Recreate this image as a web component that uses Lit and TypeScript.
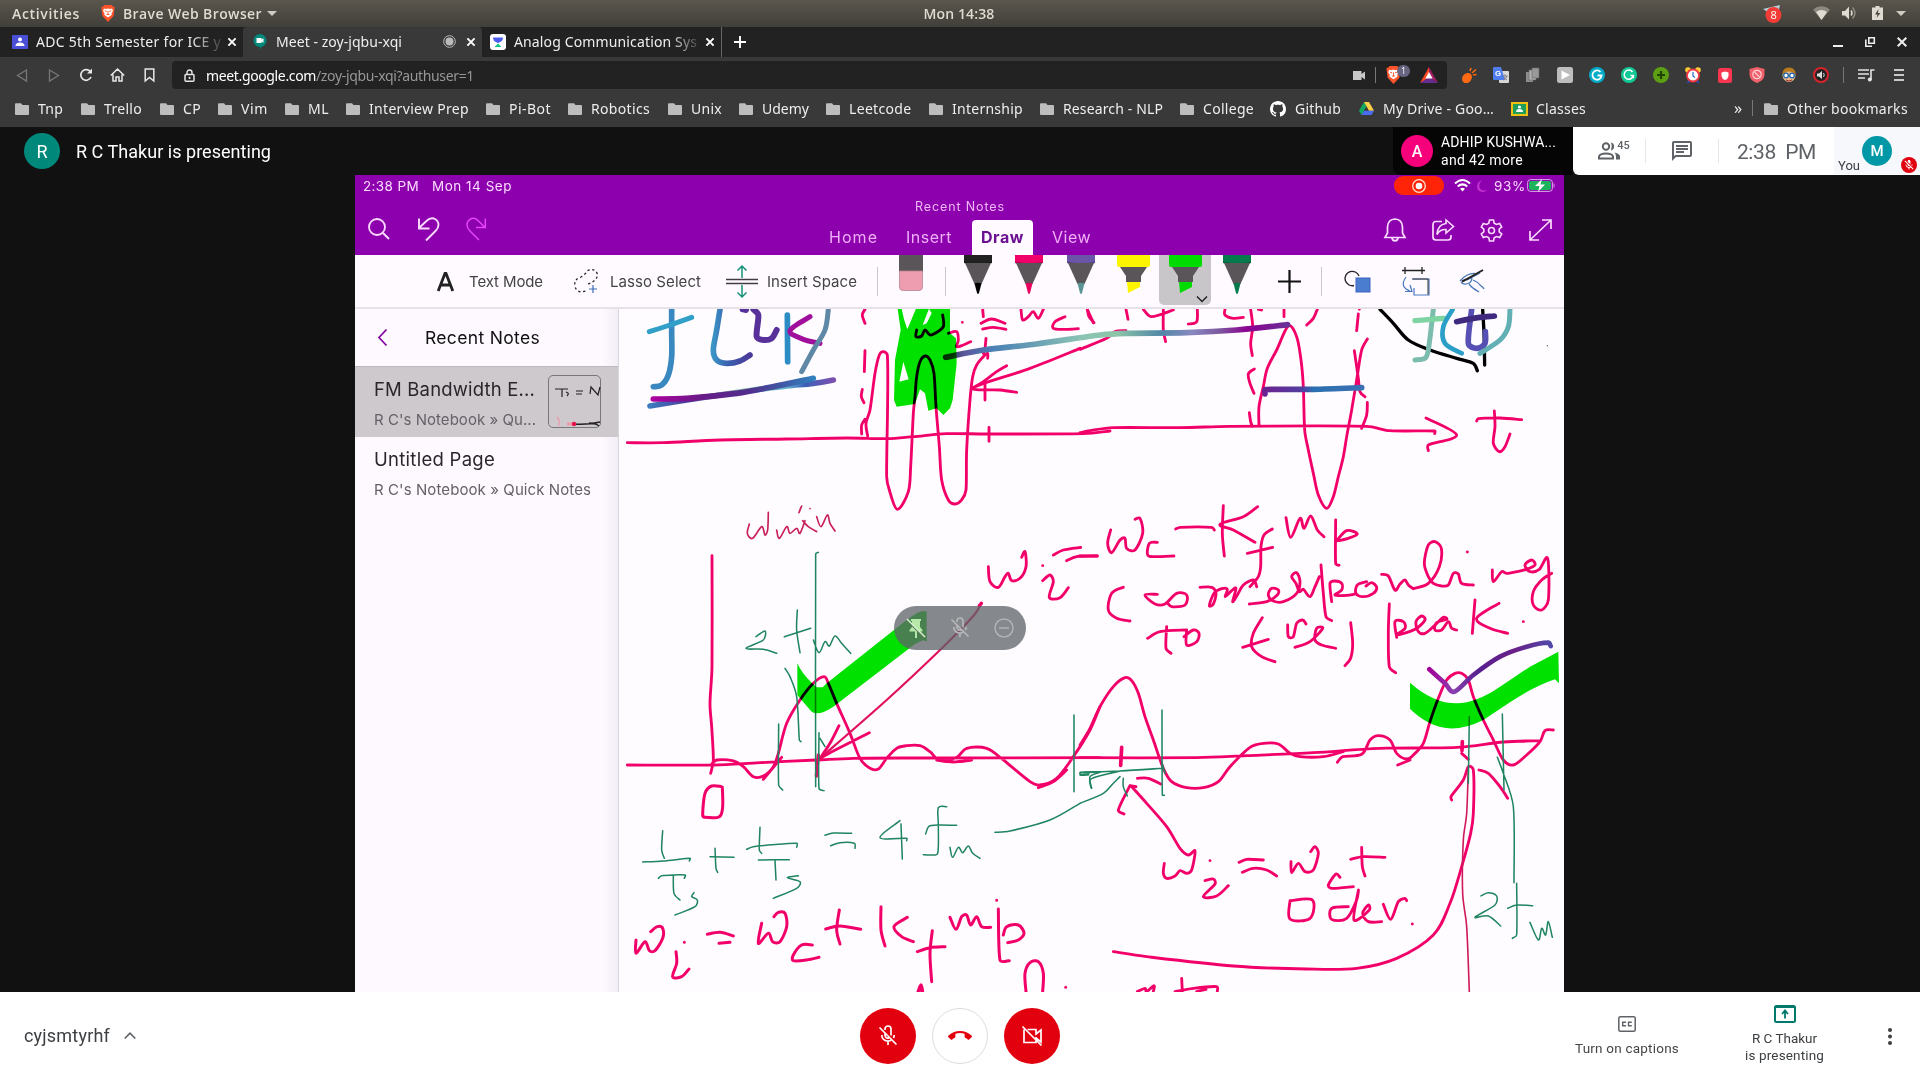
import { LitElement, html, svg, css } from "lit";
import { customElement, property } from "lit/decorators.js";
import { styleMap } from "lit/directives/style-map.js";

/* A one-line label whose tracking is tuned so that it spans a given width. */
@customElement("fit-text")
class FitText extends LitElement {
  @property() text = "";
  @property({ type: Number }) w = 0;
  static styles = css`
    :host { display: inline-block; white-space: pre; flex: none; }
  `;
  updated() {
    const s = this.renderRoot.querySelector("span") as HTMLElement;
    s.style.letterSpacing = "0px";
    const natural = s.getBoundingClientRect().width;
    s.style.letterSpacing = (this.w - natural) / this.text.length + "px";
  }
  render() {
    return html`<span>${this.text}</span>`;
  }
}

/* Catmull-Rom smoothing through a list of "x,y" points; handles are kept short on short segments. */
function smooth(src: string): string {
  const p = src.trim().split(/\s+/).map((q) => q.split(",").map(Number));
  let d = `M${p[0][0]} ${p[0][1]}`;
  if (p.length === 1) return d + "h.1";
  for (let i = 0; i < p.length - 1; i++) {
    const a = p[Math.max(0, i - 1)], b = p[i], c = p[i + 1], e = p[Math.min(p.length - 1, i + 2)];
    const len = Math.hypot(c[0] - b[0], c[1] - b[1]);
    const handle = (from: number[], to: number[]) => {
      const x = to[0] - from[0], y = to[1] - from[1], l = Math.hypot(x, y) || 1;
      const k = Math.min(1 / 6, (len * 0.36) / l);
      return [x * k, y * k];
    };
    const h1 = handle(a, c), h2 = handle(b, e);
    d += `C${b[0] + h1[0]} ${b[1] + h1[1]} ${c[0] - h2[0]} ${c[1] - h2[1]} ${c[0]} ${c[1]}`;
  }
  return d;
}
const ink = (strokes: string, color: string, w = 6.5) =>
  svg`<path d=${strokes.split(";").filter((s) => s.trim()).map(smooth).join("")} stroke=${color} stroke-width=${w} />`;

const PINK = "#f2006a";
const GREEN = "#1f8560";

const A_PINK = `22,428 130,428 300,420 500,417 680,414 800,416 880,410 980,401 1100,402 1390,401 1470,393;
743,408 738,370 750,330 765,220 778,165 790,155 802,165 803,300 800,530 808,570 832,628 865,575 872,500 880,340 885,290 890,230 900,185 915,168 930,180 942,220 948,320 958,440 965,540 985,600 1005,612 1025,600 1038,570 1040,450 1050,300 1058,230 1070,195 1095,165 1103,160 1103,175;
735,28 727,45 735,70;735,152 733,215;727,268 724,290 732,308;735,358 725,375 725,402;1107,382 1107,424;1095,250 1095,300;
1380,145 1230,205 1060,263 1140,270 1190,277;1160,197 1130,215 1090,245 1060,263;
890,90 888,110 905,108 915,90 930,105 945,100 970,80 968,45;985,100 1010,95 1015,120 1010,140 1030,135 1052,125;1027,67;
1088,27 1090,50;1083,70 1115,57 1155,70;1088,87 1120,82 1158,88;1098,115 1095,145 1090,160;
1203,28 1208,60 1225,50 1240,35 1255,55 1270,28;1335,50 1305,65 1300,85 1335,88 1375,86;1402,28 1420,68`;
const A_THIN = `388,672 382,700 398,715 425,680 435,705 443,690 445,637;470,690 478,715 500,680 510,700 530,685 540,700 555,662;545,618 537,638 543,622;548,662 565,680 590,695;590,650 603,680 622,645 630,670 645,693;570,626`;
const B_PINK = `0,398 30,392 100,383 300,383 450,379 860,379 930,392 1064,393 1064,401;1038,354 1130,405 1045,435 1045,452;
0,148 80,115 105,95 138,92;
22,28 27,50 42,68;138,28 144,58;190,28 215,50 280,30;250,30 250,90 257,125;352,28 350,65 325,72;435,28 435,45 460,55 490,52;512,28 518,80 512,130 517,167;612,28 612,50;712,28 700,55 680,75;535,28 545,30;835,42 830,92;838,28;523,207 505,222 510,250 522,280;508,338 512,365 517,380;
537,375 537,320 550,260 562,205 590,150 625,78 650,110 663,180 670,260 674,390 685,450 700,520 715,585 740,625 760,590 775,530 790,470 800,410 815,330 830,240 845,150 862,117;823,152 835,235 840,275 855,290;862,307 860,345 845,385;
1190,363 1195,356 1260,354 1325,359;1243,333 1245,380 1240,430 1258,455 1275,440 1290,402;
92,690 83,730 95,758 120,720 135,715 140,745 165,750 188,700 180,655 165,658;0,743;0,768 52,769;232,727 208,730 203,765 225,770 282,768;287,687 300,682 395,682 403,690;430,617 427,700 433,768;533,620 490,650 420,673 460,690 525,727;577,687 552,705 543,740 542,800 535,830 510,860;502,760 578,742;618,653 632,712 660,655 672,685 692,648 712,690 732,710;767,660 767,790 777,796;775,722 805,715 832,702 800,692 770,722;
130,862 95,880 85,930 110,955 150,963;232,883 195,885 225,912 255,912 290,880 320,885 315,915 275,920 262,908;360,862 395,862 408,880 400,912 388,917 402,880 425,866 442,868 436,890 455,872 468,865 458,905 472,885 490,855 520,840 530,860;
508,912 560,905 592,885 595,870 575,865 565,885 580,903 610,905 650,880 660,845 650,818 635,830 648,850 658,875 670,868 690,890 705,860 718,830;723,795 730,880 738,950 755,962;755,905 750,850 765,843 785,850 785,870 765,885 800,886 825,882;860,845 832,855 828,880 850,890 880,880 890,862 875,848 858,858;905,823 925,828 945,870 960,852 975,840 985,855 1000,866;1000,866 1045,850 1078,800 1084,745 1065,725 1045,735 1033,790 1045,830 1060,850 1085,858 1105,855 1120,820 1135,822 1145,850 1180,855;1162,756;1237,810 1240,845 1265,815 1280,820 1310,815 1340,808 1365,795 1355,780 1335,795 1350,815 1378,808 1403,775 1405,900 1385,930 1360,915 1360,875 1385,840 1415,820;
203,1015 240,995 320,990;260,980 258,1045 273,1060;320,990 320,1035 350,1025 357,1000 340,990 312,1010;547,953 520,1000 515,1040 545,1070 585,1085;488,1042 565,1018;623,975 625,1010 640,1010 650,970 668,960 678,972;645,1042 690,1025 728,985 710,985 705,1020 725,1035 767,1045;812,968 818,1030 812,1075 795,1097;
928,912 925,1000 928,1100 947,1118;950,1012 945,965 970,965 975,985 950,1005 1005,988 1035,960 1025,948 1008,965 1015,995 1035,1000 1060,980 1090,952 1100,958 1070,968 1065,990 1085,990 1105,965 1115,985 1130,990;1185,900 1177,1000;1257,910 1190,955 1230,985 1283,1000;1330,965`;
const C_PINK = `276,47 276,380 270,490 275,560 280,660 272,700;22,675 280,675 420,668 590,660 700,655 900,654 1440,653;
275,672 290,660 340,663 370,680 400,710 430,708 460,680 475,640 500,550 540,480 580,430 612,410 625,430 650,490 690,580 720,655 750,685 775,687 800,655 830,625 860,617 900,617 930,635 960,662 1010,652 1040,625 1100,625 1150,660 1230,725 1260,735 1310,715 1360,650 1410,570 1440,500;430,718 485,652;1255,743 1300,725 1340,690;950,660 1000,666 1055,660;657,557 630,610 600,655;748,578 640,633 600,655;
1105,80 1110,125 1135,142 1155,110 1165,100 1175,122 1200,115 1218,80 1215,35 1205,52;1268,122 1290,105 1300,125 1288,172 1320,173 1345,143;1268,77;1300,45 1330,30 1382,22;1340,62 1370,50 1432,47`;
const C_GREEN = `595,37 587,42 587,740;532,210 530,270 540,338;493,290 572,265;408,290 435,273 430,300 378,325 430,328 470,340;580,300 597,338 615,305 628,318 645,288 665,310 692,340;495,385 510,410 530,470 538,600 543,605;476,552 476,735 488,750;597,578 597,745 612,752;600,595 615,620;1362,525 1362,755;1440,695 1382,697 1382,705 1405,705;1440,697 1410,710 1415,745`;
const D_GREEN = `128,212 125,270 133,295;68,306 130,303 210,295 208,303;115,355 125,347 195,345 193,355;160,348 162,400 180,420;222,398 215,410 232,420 225,440 165,465;270,290 342,292;285,265 288,325 293,337;420,202 418,270 425,280;380,268 400,260 530,250 530,262;415,300 508,299;465,302 468,360;535,347 502,353 540,365 530,385 460,415;615,226 640,219 695,220;632,257 660,248 703,250 705,265;840,182 780,233 860,235 860,242;843,192 847,297;980,140 955,143 955,195 953,280 930,285 910,284;917,222 930,197 1010,196;990,262 998,292 1015,262 1028,278 1045,258 1058,280 1080,295;1125,217 1170,213 1290,180 1380,130`;
const D_PINK = `48,540 48,580 75,545 88,572 105,572 128,535 128,505 112,500 92,515;168,575 170,610 158,650 185,650 207,627;193,547;262,523 300,517 340,528;297,550 330,547;425,490 415,550 445,520 458,545 480,545 500,500 495,460 475,457 462,470;577,555 545,555 520,585 520,602 560,600 597,592;617,507 660,498 722,508;658,450 650,510 660,552;783,440 783,510 795,558;862,472 822,500 845,530 880,545;937,512 930,580 935,665;892,575 930,563 975,560;990,472 1008,508 1025,470 1040,465 1052,495 1070,470 1085,500 1112,502;1135,447 1140,600 1168,602;1150,525 1160,500 1195,495 1212,520 1195,540 1163,548;1130,421;1218,695 1215,640 1230,608 1255,605 1270,640 1268,695;1337,682`;
const E_PINK = `0,315 30,265 60,200 100,140 135,113 155,122 175,160 195,230 220,300 250,385 275,425 320,443 370,443 415,425 450,380 510,322 550,310 595,312 630,340 660,350 730,350 790,335;0,353 350,353 500,347 700,338 900,325 1130,322 1270,306 1380,302;
772,367 788,350 845,343 870,300 895,287 930,300 950,340 980,357 1000,345 1030,310 1050,245 1075,175 1100,120 1125,100 1145,100 1165,120 1180,170 1210,240 1240,300 1270,360 1300,375 1340,345 1380,305 1395,272 1420,270;953,375 990,360;
150,437 115,510 132,522;168,440 150,437;155,440 200,490 260,560 300,625 325,645 345,633 335,690 320,700 300,692 285,708 260,715 250,700 253,670;172,415 205,415 242,432;375,722 400,717 405,732 370,770 410,768 445,737;390,662;477,667 500,658 550,660;487,697 520,685 560,690 590,708;633,665 635,698 655,670 675,695 700,690 715,640 705,620 692,635;780,712 768,702 745,735 755,745 820,740;812,658 850,650 915,652;845,622 847,680 855,708;630,782 697,780 690,835 630,837 630,782;
805,800 755,805 755,838 800,835 830,780 835,752 822,840 868,810 865,795 848,820 865,845 905,845;910,793 932,838 955,785 975,775 980,782;997,852;
100,935 200,950 460,978 680,987 830,985 950,955 1060,885 1110,790 1145,680 1172,580 1180,520 1180,390 1165,380 1150,420 1113,470 1115,480;1197,390 1225,400 1260,440 1283,475;1145,340 1165,358;
172,1055 195,1045 200,1055 222,1037 220,1055;305,1015 307,1055;285,1055 340,1045 410,1040 412,1055;350,1055 378,1048`;
const E_GREEN = `246,210 247,465 253,466;0,405 27,402;0,398 120,393 245,385;120,393 50,410 30,420 33,443;120,410 100,430 70,460 0,490;130,415 130,440 142,468;245,365 255,400;1168,230 1165,430;1267,222 1272,450;1252,352 1270,400 1300,500 1302,728;1203,768 1225,758 1250,768 1245,795 1185,832 1225,828 1262,858;1310,730 1310,885 1297,895;1283,805 1310,795 1358,797;1350,847 1375,900 1385,865 1397,885 1405,845 1417,892`;

const grad = (id: string, x1: number, x2: number, stops: [number, string][]) => svg`
  <linearGradient id=${id} gradientUnits="userSpaceOnUse" x1=${x1} y1="0" x2=${x2} y2="0">
    ${stops.map(([o, c]) => svg`<stop offset=${o} stop-color=${c} />`)}
  </linearGradient>`;

@customElement("ink-canvas")
class InkCanvas extends LitElement {
  static styles = css`
    :host { display: block; }
    svg { display: block; }
    g { fill: none; stroke-linecap: round; stroke-linejoin: round; }
    .hl { fill: #00e400; stroke: none; mix-blend-mode: multiply; fill-rule: evenodd; }
  `;
  render() {
    return html`<svg width="945" height="683" viewBox="619 309 945 683">
      <defs>
        ${grad("long", 975, 2005, [[0, "#35305c"], [0.06, "#5a5a9c"], [0.14, "#4a80b4"], [0.4, "#8cc4b4"], [0.5, "#8cc4a8"], [0.63, "#5088a8"], [0.72, "#8a88c0"], [0.8, "#7c58a0"], [0.88, "#8c0090"], [1, "#6a3098"]])}
        ${grad("bar", 550, 850, [[0, "#6c2290"], [0.4, "#5040a0"], [0.5, "#2a70b0"], [1, "#3c70b4"]])}
        ${grad("u1", 90, 590, [[0, "#b000a0"], [0.3, "#6a1a88"], [0.6, "#50308c"], [1, "#2f84c0"]])}
        ${grad("u2", 80, 640, [[0, "#3a80c0"], [0.25, "#50309a"], [0.5, "#80b8a0"], [0.75, "#60b0cc"], [0.85, "#3c60b8"], [1, "#7a50b0"]])}
        ${grad("par", 280, 390, [[0, "#3a94c4"], [0.4, "#3a60b0"], [1, "#4a3a98"]])}
        ${grad("chk", 1048, 1412, [[0, "#a0009a"], [0.2, "#8a40b0"], [0.4, "#582090"], [0.7, "#6a2088"], [1, "#5048a8"]])}
      </defs>
      <g transform="translate(620 300) scale(.33333)">
        ${ink(A_PINK, PINK, 8.5)} ${ink(A_THIN, "#c8205c", 5)}
        ${ink("155,28 155,100 155,170 145,225 125,255 100,260", "#3a88c0", 17)}
        ${ink("88,95 150,75 215,52", "#30a0c8", 15)}
        ${ink("300,28 290,90 280,150 290,180 320,190 360,183 390,165", "url(#par)", 17)}
        ${ink("368,28 378,30;400,28 415,45 410,110 430,120 455,115 470,90", "#58309a", 18)}
        ${ink("502,45 503,185", "#2c8cc4", 17)}
        ${ink("570,50 510,92 550,118 600,130", "#a0109c", 15)}
        ${ink("625,28 615,90 580,150 545,215", "#5f88a6", 15)}
        ${ink("90,318 200,300 400,270 500,258 580,250 640,240", "url(#u2)", 17)}
        ${ink("100,297 200,295 350,280 450,262 580,235", "url(#u1)", 17)}
      </g>
      <g transform="translate(1080 300) scale(.33333)">
        ${ink(B_PINK, PINK, 8.5)}
        ${ink("900,28 940,70 985,120 1050,150 1130,175 1180,190 1192,212;1208,28 1212,100 1214,195", "#000", 10)}
        ${ink("1060,28 1045,150 1035,175 1005,180", "#7cbcae", 15)}
        ${ink("1005,62 1050,58 1095,55", "#7fd4a4", 16)}
        ${ink("1118,28 1090,80 1095,130 1145,160", "#2c9fc8", 14)}
        ${ink("1175,28 1165,130 1190,145 1215,130 1216,95", "#5650b4", 17)}
        ${ink("1130,65 1180,55 1243,48", "#3f2a80", 17)}
        ${ink("1290,28 1285,80 1260,120 1200,160", "#62b0b4", 15)}
        ${ink("555,282 557,269 700,268 845,263", "url(#bar)", 17)}
        ${ink("1402,137", "#555", 4)}
      </g>
      <g transform="translate(620 300) scale(.33333)">
        ${ink("977,172 1090,150 1250,132 1440,105 1520,100 1700,98 1850,90 2003,74", "url(#long)", 17)}
      </g>
      <g transform="translate(620 540) scale(.33333)">
        ${ink(C_PINK, PINK, 8.5)}
        ${ink("1085,190 1060,228 960,330 800,480 600,655", "#e0105e", 6.5)}
        ${ink("595,645 589,708;1078,197 1084,190", PINK, 10)}
        ${ink(C_GREEN, GREEN, 4.6)}
      </g>
      <g transform="translate(620 760) scale(.33333)">
        ${ink("305,80 275,78 255,100 248,165 255,172 298,170 308,140 307,82", PINK, 9)}
        ${ink(D_PINK, PINK, 9)} ${ink("895,695 903,675 907,695", PINK, 11)}
        ${ink(D_GREEN, GREEN, 4.6)}
      </g>
      <g transform="translate(1080 640) scale(.33333)">
        ${ink(E_PINK, PINK, 8.5)}
        ${ink("125,322 122,376;1147,305 1146,332", PINK, 11)}
        ${ink("1165,380 1160,520 1150,600 1148,760 1160,860 1168,1055", "#d0185c", 4.8)}
        ${ink(E_GREEN, GREEN, 4.6)}
        ${ink("1048,88 1095,130 1123,155 1180,105 1260,50 1340,20 1405,8 1412,18", "url(#chk)", 14)}
      </g>
      <path class="hl" transform="translate(620 300) scale(.33333)"
        d="M833 26H990V100L1008 115 1010 190 998 300 990 325 970 345 950 325 925 332 915 280 900 268 885 312 830 320 822 300 825 180 842 90ZM888 26L862 88 852 58 845 26ZM927 26L908 75 920 70 935 40ZM850 185L866 238 838 245Z" />
      <path class="hl" transform="translate(620 540) scale(.33333)"
        d="M532 370Q545 400 575 428L590 442H608L620 430 860 240Q905 205 920 215V305L910 300 885 312 640 500Q595 530 575 515L540 475 532 465Z" />
      <path class="hl" transform="translate(1080 640) scale(.33333)"
        d="M990 128Q1060 190 1130 190 1190 188 1260 140L1350 80 1435 35 1437 130 1425 118Q1360 140 1290 187L1210 240Q1120 285 1050 250 1010 228 990 206Z" />
    </svg>`;
  }
}

const MIC_OFF = "M19 11h-1.7c0 .74-.16 1.43-.43 2.05l1.23 1.23c.56-.98.9-2.09.9-3.28zm-4.02.17c0-.06.02-.11.02-.17V5c0-1.66-1.34-3-3-3S9 3.34 9 5v.18l5.98 5.99zM4.27 3L3 4.27l6.01 6.01V11c0 1.66 1.33 3 2.99 3 .22 0 .44-.03.65-.08l1.66 1.66c-.71.33-1.5.52-2.31.52-2.76 0-5.3-2.1-5.3-5.1H5c0 3.41 2.72 6.23 6 6.72V21h2v-3.28c.91-.13 1.77-.45 2.54-.9L19.73 21 21 19.73 4.27 3z";
const MIC_OFF_THIN = svg`<path d="M9 6V5a3 3 0 0 1 6 0v6.5M9 9v2.5a3 3 0 0 0 4 2.4M5.8 11c0 3.6 2.7 6 6.2 6 1.3 0 2.6-.4 3.6-1.1M18.200 11c0 1.200-.3 2.200-.8 3M12 17v4M3.500 3.500l17 17" fill="none" stroke="currentColor" stroke-width="1.7"/>`;
const HANGUP = "M12 9c-1.6 0-3.15.25-4.6.72v3.1c0 .39-.23.74-.56.9-.98.49-1.87 1.12-2.66 1.85-.18.18-.43.28-.7.28-.28 0-.53-.11-.71-.29L.29 13.08c-.18-.17-.29-.42-.29-.7 0-.28.11-.53.29-.71C3.34 8.78 7.46 7 12 7s8.66 1.78 11.71 4.67c.18.18.29.43.29.71 0 .28-.11.53-.29.71l-2.48 2.48c-.18.18-.43.29-.71.29-.27 0-.52-.11-.7-.28-.79-.74-1.69-1.36-2.67-1.85-.33-.16-.56-.5-.56-.9v-3.1C15.15 9.25 13.6 9 12 9z";
const CHAT = "M4 4h16v12H5.17L4 17.17V4m0-2c-1.1 0-1.99.9-1.99 2L2 22l4-4h14c1.1 0 2-.9 2-2V4c0-1.1-.9-2-2-2H4zm2 10h8v2H6v-2zm0-3h12v2H6V9zm0-3h12v2H6V6z";
const GITHUB = "M8 0C3.58 0 0 3.58 0 8c0 3.54 2.29 6.53 5.47 7.59.4.07.55-.17.55-.38 0-.19-.01-.82-.01-1.490-2.010.370-2.530-.490-2.690-.940-.090-.230-.480-.940-.820-1.130-.280-.150-.680-.520-.010-.530.630-.010 1.080.580 1.230.820.720 1.210 1.870.870 2.330.660.070-.520.280-.870.510-1.070-1.780-.200-3.640-.890-3.640-3.950 0-.870.310-1.590.820-2.150-.080-.200-.360-1.020.080-2.120 0 0 .670-.210 2.200.820.640-.180 1.320-.270 2-.270s1.360.090 2 .270c1.530-1.040 2.200-.820 2.200-.820.440 1.100.160 1.920.080 2.120.510.560.820 1.270.820 2.150 0 3.070-1.870 3.750-3.650 3.950.290.250.540.730.540 1.480 0 1.070-.010 1.930-.010 2.200 0 .210.150.460.550.380A8.010 8.010 0 0 0 16 8c0-4.420-3.580-8-8-8z";

const icon = (w: number, h: number, vb: string, body: unknown) =>
  html`<svg width=${w} height=${h} viewBox=${vb} fill="none">${body}</svg>`;
const folder = icon(14, 12, "0 0 14 12", svg`<path d="M0 1.2Q0 .2 1 .2H6L7.500 2H13Q14 2 14 3V11Q14 12 13 12H1Q0 12 0 11Z" fill="#bdbdbd"/>`);
const brave = (w: number, h: number) => icon(w, h, "0 0 14 17", svg`
  <path d="M3.500 0h7l1.500 1.500L13.700 2l-.4 3.500L12.500 11 7 17 1.500 11 .7 5.500.3 2 2 1.500Z" fill="#fb542b"/>
  <path d="M3 3.500l2 .4 2-.5 2 .5 2-.4 1 2.300-1.500 2.500.3 1.500-2 1.500L7 12.500l-1.800-1.200-2-1.500.3-1.500L2 5.800Z" fill="#fff"/>
  <path d="M3.700 5.800l2 .7M10.300 5.800l-2 .7M7 6v3.500M5.500 9.500h3" stroke="#fb542b" stroke-width=".9"/>`);

const bookmarks: [string, number, number][] = [
  ["Tnp", 66, 25], ["Trello", 79, 38], ["CP", 58, 18], ["Vim", 67, 27], ["ML", 61, 21],
  ["Interview Prep", 140, 100], ["Pi-Bot", 82, 42], ["Robotics", 100, 59], ["Unix", 71, 31],
  ["Udemy", 87, 47], ["Leetcode", 103, 62.5], ["Internship", 111, 71], ["Research - NLP", 140, 100], ["College", 89, 51],
];

const extensions = [
  svg`<ellipse cx="6" cy="11" rx="5.500" ry="4.500" transform="rotate(-50 6 11)" fill="#ff6a13"/><path d="M9 4l1-3M11 6l4-3.500M12 8l3.500-.5" stroke="#ff6a13" stroke-width="1.600"/>`,
  svg`<rect x="6" y="4" width="10" height="12" rx="1" fill="#d8d8d8"/><path d="M0 1Q0 0 1 0H8L12 13H1Q0 13 0 12Z" fill="#4f7df0"/><path d="M9.500 9h5M12 7.500v1.500M14 9q-1 3-3.500 4M11 10q1 2 3 3" stroke="#777" stroke-width=".9"/><text x="2" y="9" font-size="8" font-weight="700" fill="#fff">G</text>`,
  svg`<rect x="1" y="5" width="7" height="10" fill="#8d8d8d"/><rect x="4" y="3" width="7" height="10" fill="#b0b0b0" stroke="#666" stroke-width=".6"/><rect x="7" y="1" width="7" height="10" fill="#999" stroke="#666" stroke-width=".6"/>`,
  svg`<rect width="16" height="16" rx="2.500" fill="#bdbdbd"/><path d="M4.500 3.500L13 8l-8.500 4.500Z" fill="#fff"/>`,
  svg`<circle cx="8" cy="8" r="8" fill="#00acc8"/><path d="M11.500 5A4.600 4.600 0 1 0 12.600 8.500H8.500" stroke="#fff" stroke-width="1.800"/>`,
  svg`<circle cx="8" cy="8" r="8" fill="#11ca95"/><path d="M11.500 5A4.600 4.600 0 1 0 12.300 8.500H9.500M12.300 8v3" stroke="#fff" stroke-width="1.500"/>`,
  svg`<circle cx="8" cy="8" r="8" fill="#5d9f12"/><path d="M8 4v8M4 8h8" stroke="#234305" stroke-width="2.200"/>`,
  svg`<circle cx="3" cy="3" r="2.800" fill="#ffcc33"/><circle cx="13" cy="3" r="2.800" fill="#ffcc33"/><circle cx="8" cy="8.500" r="6" fill="#fff" stroke="#f03a47" stroke-width="1.800"/><path d="M8 5v4l2 1.500" stroke="#2b66c8" stroke-width="1.200"/><path d="M4 14l-1.500 2M12 14l1.500 2" stroke="#2b4fc8" stroke-width="1.500"/>`,
  svg`<rect x="1" y="1" width="14" height="15" rx="2.500" fill="#f8364f"/><path d="M8 4.500l3.500 1V9Q11 12 8 13 5 12 4.500 9V5.500Z" fill="#fff"/>`,
  svg`<path d="M8 0l7.500 2V8Q15 13.500 8 16 1 13.500.5 8V2Z" fill="#f0606a"/><circle cx="8" cy="7.500" r="4.200" stroke="#ffd0d4" stroke-width="1.200"/><path d="M5.500 5l5 5" stroke="#ffd0d4" stroke-width="1.200"/>`,
  svg`<circle cx="8" cy="8.500" r="6.500" fill="#e9b98c"/><path d="M1.500 8Q1 .5 8 .5t6.500 7.500Q12 4.500 8 4.500 4 4.500 1.500 8Z" fill="#b87a1d"/><circle cx="5" cy="8.500" r="2.300" fill="#fff" stroke="#1f66b0" stroke-width="1.300"/><circle cx="11" cy="8.500" r="2.300" fill="#fff" stroke="#1f66b0" stroke-width="1.300"/><path d="M5 13q3 2 6 0" stroke="#a03030"/>`,
  svg`<circle cx="8" cy="8" r="7" fill="#222" stroke="#d8232a" stroke-width="2"/><path d="M4 6.500h2L9 4v8L6 9.500H4Z" fill="#ddd"/><path d="M10.500 6q1.500 2 0 4" stroke="#ddd"/>`,
];

const pen = (cap: string, tip: string) => icon(28, 40, "0 0 28 40", svg`
  <path d="M0 0H28V8H0Z" fill=${cap}/><path d="M0 6.500Q14 9.500 28 6.500V8.500Q14 11 0 8.500Z" fill="#0003"/>
  <path d="M1 8H27L17.500 29H10.500Z" fill="#5a5558"/><path d="M10.500 28.500Q14 27 17.500 28.500L15 38Q14 40 13 38Z" fill=${tip}/>`);
const marker = (c: string) => icon(33, 40, "0 0 33 40", svg`
  <path d="M0 0H33V10Q33 12 31 12H2Q0 12 0 10Z" fill=${c}/><path d="M3 12H30L24 21V27H9V21Z" fill="#5a5558"/>
  <path d="M10 27H23V32L11 38Z" fill=${c}/>`);

@customElement("app-root")
class AppRoot extends LitElement {
  static styles = css`
    :host { display: block; width: 1920px; height: 1080px; overflow: hidden; background: #111; font-family: "Noto Sans", "Open Sans", sans-serif; }
    * { box-sizing: border-box; }
    svg { display: block; flex: none; overflow: visible; }
    .row { display: flex; align-items: center; }
    .grow { flex: 1; }
    .sys { height: 27px; background: linear-gradient(#5a564d, #413f3a); color: #dfdbd2; font: 600 14px "Open Sans", sans-serif; display: grid; grid-template-columns: 1fr auto 1fr; align-items: center; padding: 0 14px 1px 12px; }
    .sys .left { gap: 0; }
    .sys .bravewrap { margin: 0 8px 0 21px; }
    .sys .caret { margin-left: 5px; }
    .sys .right { justify-content: flex-end; }
    .m-wifi { margin-left: 29px; } .m-vol { margin-left: 12px; } .m-bat { margin-left: 15px; } .m-car { margin-left: 13px; }
    .tabs { height: 30px; background: #222; color: #eee; font-size: 14px; }
    .tab { height: 30px; display: flex; align-items: center; padding-bottom: 1px; }
    .t1 { width: 243px; padding-left: 12px; }
    .t2 { width: 239px; padding-left: 10px; background: #393939; border-radius: 4px 4px 0 0; }
    .t3 { width: 240px; padding-left: 8px; border-right: 1px solid #666; }
    .label1 { margin-left: 8px; width: 185px; }
    .label2 { margin-left: 9px; width: 167px; }
    .fade { -webkit-mask-image: linear-gradient(90deg, #000 84%, #0002 100%); mask-image: linear-gradient(90deg, #000 84%, #0002 100%); }
    .x1 { margin-left: 7px; } .x2 { margin-left: 11px; } .x3 { margin-left: 7px; }
    .new { margin-left: 12px; }
    .win { gap: 22px; padding-right: 13px; }
    .tools { height: 36px; background: #393939; }
    .nav { width: 172px; padding-left: 16px; }
    .nav svg:nth-child(2) { margin-left: 20px; } .nav svg:nth-child(3) { margin-left: 19px; } .nav svg:nth-child(4) { margin-left: 17px; } .nav svg:nth-child(5) { margin-left: 19px; }
    .url { width: 1275px; height: 28px; background: #222; border-radius: 4px; padding: 0 9px 0 12px; color: #fff; font-size: 14px; }
    .url .addr { margin-left: 11px; }
    .dim { color: #979797; }
    .vline { width: 1px; background: #777; height: 16px; flex: none; }
    .url .vline { margin: 0 10px; }
    .shield { position: relative; margin-right: 18px; width: 16px; }
    .shield i { position: absolute; left: 11px; top: -1px; width: 13px; height: 12px; border-radius: 6px; background: #666480; color: #fff; font: 8px/12px "Noto Sans", sans-serif; text-align: center; }
    .ext { padding-left: 14px; gap: 16px; width: 391px; font-family: "Liberation Sans", sans-serif; }
    .end { gap: 0; padding-left: 5px; }
    .end svg:nth-child(2) { margin-left: 14px; } .end svg:nth-child(3) { margin-left: 19px; }
    .marks { height: 34px; background: #393939; color: #eee; font-size: 14px; padding-left: 15px; padding-bottom: 4px; }
    .mark { display: flex; align-items: center; gap: 9px; flex: none; }
    .mark svg { margin-top: 1px; }
    .git { width: 89px; margin-left: 1px; } .drive { width: 152px; } .cls { width: 223px; gap: 8px; }
    .more { width: 18px; font-size: 16px; }
    .meet { height: 48px; font-family: Roboto, sans-serif; color: #fff; background: #111; }
    .av { border-radius: 50%; display: flex; align-items: center; justify-content: center; flex: none; color: #fff; }
    .av.r { width: 36px; height: 36px; background: #00897b; margin-left: 24px; font-size: 18px; }
    .pres { margin-left: 16px; font-size: 18px; }
    .people { width: 180px; height: 48px; background: #050505; border-radius: 0 0 0 8px; padding-left: 8px; }
    .av.a { width: 32px; height: 32px; background: #f6007c; font: 500 16px Roboto, sans-serif; }
    .names { margin-left: 8px; display: flex; flex-direction: column; font-size: 14px; line-height: 18px; padding-bottom: 1px; }
    .panel { width: 347px; height: 47.500px; align-self: flex-start; background: #fff; border-radius: 0 0 0 6px; color: #5f6368; }
    .panel .cell { display: flex; align-items: center; justify-content: center; height: 24px; border-right: 1px solid #e4e6e8; }
    .c1 { width: 73px; padding-left: 10px; } .c2 { width: 73px; } .panel .c3 { width: 115px; border: 0; font-size: 21px; padding-top: 2px; }
    .n45 { font: 500 11px Roboto, sans-serif; align-self: flex-start; margin: 0 0 0 -3px; }
    .you { flex: 1; height: 47px; background: #f6f8fb; position: relative; color: #3c4043; font-size: 13px; }
    .you .lbl { position: absolute; left: 4px; bottom: 1px; }
    .av.m { position: absolute; left: 28px; top: 9px; width: 30px; height: 30px; background: #0097a7; font: 500 15px Roboto, sans-serif; }
    .mut { position: absolute; left: 67px; top: 30px; width: 16px; height: 16px; border-radius: 50%; background: #e0000f; color: #fff; display: grid; place-items: center; }
    .stage { height: 817px; background: #111; padding-left: 355px; position: relative; }
    .app { width: 1209px; height: 817px; background: #fefaff; font-family: Inter, sans-serif; color: #333; overflow: hidden; }
    .head { height: 80px; background: #8c00ad; color: #fbdcff; display: grid; grid-template-columns: 1fr 1fr 1fr; }
    .head .l { padding-left: 8px; }
    .st { height: 21px; font-size: 13.500px; gap: 13px; }
    .acts { margin-top: 21px; height: 24px; }
    .acts svg:nth-child(1) { margin-left: 5px; } .acts svg:nth-child(2) { margin-left: 28px; } .acts svg:nth-child(3) { margin-left: 26px; }
    .mid { display: flex; flex-direction: column; align-items: center; }
    .rn { margin-top: 24px; margin-left: 1px; font-size: 12.500px; line-height: 15px; color: #f0b8f8; }
    .menu { margin-top: 6px; height: 35px; font-size: 16px; color: #f0b0f8; align-self: flex-start; padding-left: 71px; }
    .menu > fit-text, .menu > span { margin-top: -2px; }
    .menu .home { width: 77px; } .menu .ins { width: 66px; }
    .drawtab { width: 61px; height: 35px; background: #fefaff; border-radius: 4px 4px 0 0; color: #6a1090; font-weight: 700; padding: 7px 9px 0; margin-right: 19px; }
    .rr { display: flex; flex-direction: column; align-items: flex-end; }
    .rr .st { gap: 0; padding-right: 8px; }
    .rr .bar { margin-top: 21px; padding-right: 12px; gap: 26px; height: 26px; }
    .rec { width: 50px; height: 19px; border-radius: 9px; background: #ff2408; display: grid; place-items: center; margin-right: 10px; }
    .ribbon { height: 54px; border-bottom: 2px solid #e6e2e8; font-size: 15px; color: #444; background: #fefaff; padding-left: 82px; }
    .ribbon .top { align-self: flex-start; }
    .tm { margin-left: 15px; } .g1 { margin-left: 31px; } .g2 { margin-left: 12px; } .g3 { margin-left: 25px; } .g4 { margin-left: 9px; }
    .rl { width: 1px; height: 29px; background: #cbc7cd; }
    .r1 { margin-left: 20px; } .er { margin-left: 21px; } .r2 { margin-left: 22px; } .p1 { margin-left: 18px; } .p2 { margin-left: 23px; } .p3 { margin-left: 24px; } .p4 { margin-left: 22px; }
    .sel { width: 52px; height: 50px; background: #c9c6ca; border-radius: 0 0 5px 5px; margin-left: 9px; padding-left: 10px; position: relative; }
    .sel .dn { position: absolute; right: 3px; bottom: 2px; }
    .p6 { margin-left: 12px; } .plus { margin-left: 27px; } .r3 { margin-left: 20px; } .s1 { margin-left: 22px; } .s2 { margin-left: 32px; } .s3 { margin-left: 30px; }
    .body { display: flex; height: 683px; }
    .side { width: 264px; background: linear-gradient(90deg, #fef9ff 94%, #f3eef5); border-right: 1px solid #d9d5db; color: #2a262b; }
    .shead { height: 57px; padding-left: 23px; font-size: 17.500px; color: #111; }
    .shead fit-text { margin-left: 38px; }
    .note { height: 71px; padding: 8px 17px 0 19px; display: flex; justify-content: space-between; }
    .note.on { background: #cdc9cd; border-top: 1px solid #bdb9bd; }
    .nt { font-size: 18.500px; line-height: 25px; display: block; margin-top: 2px; }
    .ns { font-size: 15px; line-height: 20px; display: block; margin-top: 8px; color: #666168; }
    .thumb { width: 53px; height: 53px; border: 1px solid #777; border-radius: 5px; margin-top: 0; }
    .pad { flex: 1; background: #fffcff; }
    .pill { position: absolute; left: 894px; top: 431px; width: 132px; height: 44px; border-radius: 22px; background: rgba(95, 99, 104, 0.76); color: #b5b7b9; padding: 0 12px; gap: 24px; }
    .foot { height: 88px; background: #fff; font-family: Roboto, sans-serif; color: #3c4043; display: grid; grid-template-columns: 1fr auto 1fr; align-items: center; }
    .room { padding-left: 24px; font-size: 18px; gap: 14px; padding-bottom: 1px; }
    .calls { gap: 16px; }
    .call { width: 56px; height: 56px; border-radius: 50%; background: #e2000f; color: #fff; display: grid; place-items: center; }
    .call.end { background: #fff; border: 1px solid #dadce0; padding: 0; color: #e2000f; }
    .fr { justify-content: flex-end; padding-right: 24px; font-size: 13.500px; }
    .col { display: flex; flex-direction: column; align-items: center; }
    .cap { width: 104px; gap: 8px; margin-right: 66px; color: #444746; }
    .prs { width: 79px; margin-right: 60px; line-height: 17.500px; margin-top: -3px; }
    .prs svg { margin-bottom: 7px; }
    .dots { width: 12px; }
  `;

  private x = icon(8, 8, "0 0 8 8", svg`<path d="M.4.4l7.200 7.200M7.600.4L.4 7.600" stroke="#fff" stroke-width="1.900"/>`);

  private system() {
    return html`<div class="sys">
      <div class="row left">
        <fit-text text="Activities" w="68"></fit-text>
        <span class="bravewrap">${brave(14, 17)}</span>
        <fit-text text="Brave Web Browser" w="139"></fit-text>
        <span class="caret">${icon(10, 5, "0 0 10 5", svg`<path d="M0 0h10L5 5z" fill="#d0ccc4"/>`)}</span>
      </div>
      <fit-text text="Mon 14:38" w="71"></fit-text>
      <div class="row right">
        ${icon(21, 18, "0 0 21 18", svg`<path d="M0 5L17 1 14 14Z" fill="#b8d0dc"/><circle cx="10.500" cy="11" r="8" fill="#f33c35"/><text x="7.500" y="15" font-size="11" font-weight="400" fill="#fff">8</text>`)}
        <span class="m-wifi">${icon(17, 14, "0 0 17 14", svg`<path d="M0 3.500Q8.500-3 17 3.500L8.500 14Z" fill="#8c8980"/><path d="M3 6Q8.500 2 14 6L8.500 14Z" fill="#dfdbd2"/>`)}</span>
        <span class="m-vol">${icon(15, 14, "0 0 15 14", svg`<path d="M0 5h3l4-4.500v13L3 9.500H0Z" fill="#dfdbd2"/><path d="M9 4.500q2 2.500 0 5" stroke="#dfdbd2" stroke-width="1.500"/><path d="M10.500 1.500q5 5.500 0 11" stroke="#8c8980" stroke-width="1.500"/>`)}</span>
        <span class="m-bat">${icon(11, 14, "0 0 11 14", svg`<path d="M3.500 0h4v1.500H11V14H0V1.500H3.500Z" fill="#dfdbd2"/><path d="M6.500 3L3 8.500h2.500L4.500 12 8.500 7H6Z" fill="#4c4943"/>`)}</span>
        <span class="m-car">${icon(10, 5, "0 0 10 5", svg`<path d="M0 0h10L5 5z" fill="#d0ccc4"/>`)}</span>
      </div>
    </div>`;
  }

  private tabs() {
    return html`<div class="row tabs">
      <div class="tab t1">
        ${icon(16, 14, "0 0 16 14", svg`<rect width="16" height="14" rx="1" fill="#4a4fd8"/><circle cx="8" cy="4.500" r="2" fill="#fff"/><path d="M3.500 11q0-3.500 4.500-3.500t4.500 3.500Z" fill="#fff"/>`)}
        <fit-text class="label1 fade" text="ADC 5th Semester for ICE y" w="185"></fit-text>
        <span class="x1">${this.x}</span>
      </div>
      <div class="tab t2">
        ${icon(14, 16, "0 0 14 16", svg`<path d="M7 0a6.500 6.500 0 0 1 1.500 12.800L7 16V13A6.500 6.500 0 0 1 7 0Z" fill="#00897b"/><path d="M3.500 4h5v1.600L10.500 4.300v4.400L8.500 7.400V9h-5Z" fill="#fff"/>`)}
        <span class="label2"><fit-text text="Meet - zoy-jqbu-xqi" w="126"></fit-text></span>
        ${icon(13, 13, "0 0 13 13", svg`<circle cx="6.500" cy="6.500" r="5.800" stroke="#bbb"/><circle cx="6.500" cy="6.500" r="4" fill="#bbb"/>`)}
        <span class="x2">${this.x}</span>
      </div>
      <div class="tab t3">
        ${icon(16, 16, "0 0 16 16", svg`<rect width="16" height="16" rx="3" fill="#fff"/><path d="M3 3.500h10q0 4-5 5.500-5-1.500-5-5.500Z" fill="#4a5cf0"/><path d="M8 9.500l3.500 3.500h-7Z" fill="#12c78a"/>`)}
        <fit-text class="label1 fade" text="Analog Communication Sys" w="183"></fit-text>
        <span class="x3">${this.x}</span>
      </div>
      <span class="new">${icon(12, 12, "0 0 12 12", svg`<path d="M6 0v12M0 6h12" stroke="#fff" stroke-width="1.900"/>`)}</span>
      <span class="grow"></span>
      <div class="row win">
        ${icon(10, 10, "0 0 10 10", svg`<path d="M0 9h10" stroke="#eee" stroke-width="2"/>`)}
        ${icon(10, 10, "0 0 10 10", svg`<path d="M3.800.8h5.500v5.500H3.800ZM.8 2.500v6.800H7" stroke="#eee" stroke-width="1.600"/>`)}
        ${icon(10, 10, "0 0 10 10", svg`<path d="M.7.7l8.600 8.600M9.300.7L.7 9.300" stroke="#eee" stroke-width="2"/>`)}
      </div>
    </div>`;
  }

  private toolbar() {
    return html`<div class="row tools">
      <div class="row nav">
        ${icon(12, 13, "0 0 12 13", svg`<path d="M10.500 1L1.500 6.500l9 5.500Z" stroke="#777" stroke-width="1.300"/>`)}
        ${icon(12, 13, "0 0 12 13", svg`<path d="M1.500 1l9 5.500-9 5.500Z" stroke="#777" stroke-width="1.300"/>`)}
        ${icon(14, 14, "0 0 14 14", svg`<path d="M11.500 4A5.300 5.300 0 1 0 12 9" stroke="#e8e8e8" stroke-width="1.700"/><path d="M13 .5V5.500H8Z" fill="#e8e8e8"/>`)}
        ${icon(15, 14, "0 0 15 14", svg`<path d="M.8 7.500L7.500 1l6.700 6.500M3 6.500V13h3V9h3v4h3V6.500" stroke="#e8e8e8" stroke-width="1.500"/>`)}
        ${icon(11, 14, "0 0 11 14", svg`<path d="M1.200 1h8.600v12L5.500 9.500 1.200 13Z" stroke="#e8e8e8" stroke-width="1.500"/>`)}
      </div>
      <div class="row url">
        ${icon(11, 13, "0 0 11 13", svg`<rect x="1" y="5.500" width="9" height="6.800" rx="1" stroke="#e4e4e4" stroke-width="1.500"/><path d="M3 5V3.500a2.500 2.500 0 0 1 5 0V5" stroke="#e4e4e4" stroke-width="1.400"/><rect x="4.700" y="7.800" width="1.700" height="2.200" fill="#e4e4e4"/>`)}
        <span class="addr row"><fit-text text="meet.google.com" w="110"></fit-text><fit-text class="dim" text="/zoy-jqbu-xqi?authuser=1" w="158"></fit-text></span>
        <span class="grow"></span>
        ${icon(12, 9, "0 0 12 9", svg`<path d="M0 0h8.500v3L12 .5v8L8.500 6v3H0Z" fill="#c8c8c8"/>`)}
        <span class="vline"></span>
        <span class="shield">${brave(15, 18)}<i>1</i></span>
        ${icon(18, 16, "0 0 18 16", svg`<path d="M9 0L0 16 9 10.500Z" fill="#ff4724"/><path d="M9 0l9 16L9 10.500Z" fill="#9e1f63"/><path d="M0 16h18L9 10.500Z" fill="#662d91"/><path d="M9 5l3.700 6.500H5.300Z" fill="#fff"/>`)}
      </div>
      <div class="row ext">${extensions.map((e) => icon(16, 16, "0 0 16 16", e))}</div>
      <div class="row end">
        <span class="vline"></span>
        ${icon(17, 13, "0 0 17 13", svg`<path d="M0 1h11M0 5h11M0 9h7M13 10.500V1h3.500" stroke="#e4e4e4" stroke-width="1.600"/><circle cx="11.800" cy="10.500" r="2" fill="#e4e4e4"/>`)}
        ${icon(10, 12, "0 0 10 12", svg`<path d="M0 1h10M0 6h10M0 11h10" stroke="#c8c8c8" stroke-width="1.800"/>`)}
      </div>
    </div>`;
  }

  private marks() {
    return html`<div class="row marks">
      ${bookmarks.map(([label, slot, w]) => html`<div class="mark" style=${styleMap({ width: slot + "px" })}>${folder}<fit-text text=${label} w=${w}></fit-text></div>`)}
      <div class="mark git">${icon(16, 16, "0 0 16 16", svg`<path d=${GITHUB} fill="#fff"/>`)}<fit-text text="Github" w="46"></fit-text></div>
      <div class="mark drive">${icon(15, 13, "0 0 15 13", svg`<path d="M5 0L0 8.700 2.500 13 7.500 4.300Z" fill="#11a861"/><path d="M5 0h5l5 8.700h-5Z" fill="#ffcf48"/><path d="M5 8.700h10L12.500 13h-10Z" fill="#4a6cf0"/>`)}<fit-text text="My Drive - Goo…" w="111"></fit-text></div>
      <div class="mark cls">${icon(17, 14, "0 0 17 14", svg`<rect x="1" y="1" width="15" height="12" fill="#1e9e58" stroke="#f2c010" stroke-width="2"/><circle cx="8.500" cy="5" r="1.600" fill="#fff"/><path d="M5 10q0-3 3.500-3t3.500 3Z" fill="#fff"/>`)}<fit-text text="Classes" w="50"></fit-text></div>
      <span class="more">»</span><span class="vline"></span>
      <div class="mark" style=${styleMap({ marginLeft: "11px" })}>${folder}<fit-text text="Other bookmarks" w="121"></fit-text></div>
    </div>`;
  }

  private meet() {
    return html`<div class="row meet">
      <div class="av r">R</div>
      <fit-text class="pres" text="R C Thakur is presenting" w="195"></fit-text>
      <span class="grow"></span>
      <div class="row people"><div class="av a">A</div>
        <div class="names"><fit-text text="ADHIP KUSHWA..." w="115"></fit-text><fit-text text="and 42 more" w="82"></fit-text></div></div>
      <div class="row panel">
        <div class="cell c1">
          ${icon(22, 18, "0 0 22 18", svg`<circle cx="8" cy="4.500" r="3.200" stroke="#5f6368" stroke-width="2"/><path d="M1 16.500V14.500Q2 11.500 8 11.500t7 3v2Z" stroke="#5f6368" stroke-width="2"/><path d="M13 .6a4 4 0 0 1 0 7.800q1.600-3.900 0-7.800ZM16.500 10.500Q22 11.800 22 14.500V17.500H18V14.500Q18 12 16.500 10.500Z" fill="#5f6368"/>`)}
          <span class="n45">45</span>
        </div>
        <div class="cell c2">${icon(24, 24, "0 0 24 24", svg`<path d=${CHAT} fill="#5f6368"/>`)}</div>
        <div class="cell c3"><fit-text text="2:38  PM" w="79"></fit-text></div>
        <div class="you"><span class="lbl">You</span><div class="av m">M</div>
          <div class="mut">${icon(12, 12, "0 0 24 24", svg`<path d=${MIC_OFF} fill="#fff"/>`)}</div></div>
      </div>
    </div>`;
  }

  private notes() {
    return html`<div class="app">
      <div class="head">
        <div class="l">
          <div class="row st"><fit-text text="2:38 PM" w="56"></fit-text><fit-text text="Mon 14 Sep" w="80"></fit-text></div>
          <div class="row acts">
            ${icon(22, 22, "0 0 22 22", svg`<circle cx="9" cy="9" r="8" stroke="#fbdcff" stroke-width="1.800"/><path d="M15 15l6 6" stroke="#fbdcff" stroke-width="2"/>`)}
            ${icon(22, 24, "0 0 22 24", svg`<path d="M1 1.500V11.500H11.500M1 11L9 3.500Q12 .5 16 1.500 20.500 3.500 20.500 8 20.500 11 17.500 14L8 23.500" stroke="#fbdcff" stroke-width="1.900"/>`)}
            ${icon(20, 24, "0 0 20 24", svg`<path d="M19.300 1.500V10.500H10M19 10.500L12 3.500Q9 .5 5.500 1.500 1 3.500 1 8 1 11 4 14L13 23" stroke="#e644f8" stroke-width="1.500"/>`)}
          </div>
        </div>
        <div class="mid">
          <fit-text class="rn" text="Recent Notes" w="90"></fit-text>
          <div class="row menu">
            <span class="home"><fit-text text="Home" w="49"></fit-text></span><span class="ins"><fit-text text="Insert" w="46"></fit-text></span>
            <div class="drawtab"><fit-text text="Draw" w="43"></fit-text></div><fit-text text="View" w="39"></fit-text>
          </div>
        </div>
        <div class="rr">
          <div class="row st">
            <div class="rec">${icon(14, 14, "0 0 14 14", svg`<circle cx="7" cy="7" r="6.300" stroke="#ffe0d0" stroke-width="1.300"/><circle cx="7" cy="7" r="3.300" fill="#fff"/>`)}</div>
            ${icon(17, 13, "0 0 17 13", svg`<path d="M1 4.500Q8.500-2.500 16 4.500M3.700 7.500q4.800-4.300 9.600 0" stroke="#fff" stroke-width="2"/><path d="M8.500 12.500L6 9.700q2.500-2 5 0Z" fill="#fff"/>`)}
            ${icon(23, 12, "-6 0 23 12", svg`<path d="M5 0Q0 6 4 9.500q3 2 6 0-1.500 3-5 2.500Q0 11 0 6.500 0 2 5 0Z" fill="#c030d0"/>`)}
            <fit-text text="93%" w="32"></fit-text>
            ${icon(30, 13, "-1 0 30 13", svg`<rect x=".6" y=".6" width="24.800" height="11.800" rx="3" stroke="#d8a8e8"/><rect x="2" y="2" width="22" height="9" rx="2" fill="#1cb35c"/><path d="M15 0L8 7h4.500L11 13l7-7.500h-4.500Z" fill="#fff"/><path d="M27 4.500v4" stroke="#d050e0" stroke-width="1.500"/>`)}
          </div>
          <div class="row bar">
            ${icon(22, 24, "0 0 22 24", svg`<path d="M1 19.500h20L18.500 15V9Q18 1.200 11 1 4 1.200 3.500 9v6ZM8 20q.5 2.800 3 2.800T14 20" stroke="#fbdcff" stroke-width="1.700"/>`)}
            ${icon(22, 22, "0 0 22 22", svg`<path d="M10 2.500H4Q1 2.500 1 5.500V18Q1 21 4 21H16Q19 21 19 18V16" stroke="#fbdcff" stroke-width="1.700"/><path d="M14 1l7.500 6.500L14 14V10.500Q8 10 5 15.500 5.500 5.500 14 4.500Z" stroke="#fbdcff" stroke-width="1.600"/>`)}
            ${icon(23, 23, "0 0 23 23", svg`<circle cx="11.500" cy="11.500" r="3" stroke="#fbdcff" stroke-width="1.600"/><path d="M9.500 1h4l.7 3.200 2.300 1.300 3.200-1 2 3.500-2.500 2.200v2.600l2.500 2.200-2 3.500-3.200-1-2.300 1.300-.7 3.200h-4l-.7-3.200-2.300-1.300-3.200 1-2-3.500 2.500-2.200v-2.600L1.300 8l2-3.500 3.200 1 2.300-1.300Z" stroke="#fbdcff" stroke-width="1.600"/>`)}
            ${icon(23, 22, "0 0 23 22", svg`<path d="M1.500 20.500L21.500 1.500M13 1h9v9M1 12v9h9" stroke="#fbdcff" stroke-width="1.700"/>`)}
          </div>
        </div>
      </div>
      <div class="row ribbon">
        ${icon(17, 19, "0 0 17 19", svg`<path d="M1.200 19L8 1.500H9L15.800 19M4 13h9" stroke="#222" stroke-width="2.800"/>`)}
        <fit-text class="tm" text="Text Mode" w="74"></fit-text>
        <span class="g1">${icon(24, 24, "0 0 24 24", svg`<path d="M14 15Q25 11 23 4 20-1.500 13 2 11 6 7 8 0 10 .8 17 3 25 12 22" stroke="#222" stroke-width="1.300" stroke-dasharray="2.300 2.600"/><path d="M19 16v8M15 20h8" stroke="#3c6cb8" stroke-width="1.200"/>`)}</span>
        <fit-text class="g2" text="Lasso Select" w="91"></fit-text>
        <span class="g3">${icon(32, 33, "0 0 32 33", svg`<path d="M0 14.500h32M0 18.500h32" stroke="#443c44" stroke-width="1.400"/><path d="M16 13V1M11.500 5.500L16 1l4.500 4.500M16 20v12M11.500 27.500L16 32l4.500-4.500" stroke="#15927a" stroke-width="1.500"/>`)}</span>
        <fit-text class="g4" text="Insert Space" w="90"></fit-text>
        <span class="rl r1"></span>
        <span class="er top">${icon(24, 36, "0 0 24 36", svg`<path d="M0 0H24V16H0Z" fill="#5a5558"/><path d="M.5 16H23.500V32Q23.500 35.500 20 35.500H4Q.5 35.500.5 32Z" fill="#ee9db0" stroke="#b88490" stroke-width=".8"/>`)}</span>
        <span class="rl r2"></span>
        <span class="p1 top">${pen("#222", "#000")}</span><span class="p2 top">${pen("#f2006a", "#e8005c")}</span>
        <span class="p3 top">${pen("#6a55a8", "#5a9494")}</span><span class="p4 top">${marker("#fdf500")}</span>
        <div class="sel top">${marker("#00dc00")}<span class="dn">${icon(12, 8, "0 0 12 8", svg`<path d="M1 1.500L6 6.500l5-5" stroke="#222" stroke-width="1.500"/>`)}</span></div>
        <span class="p6 top">${pen("#057a4c", "#067a4c")}</span>
        <span class="plus">${icon(23, 23, "0 0 23 23", svg`<path d="M11.500 0v23M0 11.500h23" stroke="#111" stroke-width="2.200"/>`)}</span>
        <span class="rl r3"></span>
        <span class="s1">${icon(26, 22, "0 0 26 22", svg`<path d="M10 15.500A7.200 7.200 0 1 1 15 6" stroke="#222" stroke-width="1.300"/><rect x="12" y="8" width="14" height="14" fill="#4a7cd0" stroke="#3c62c0"/>`)}</span>
        <span class="s2">${icon(27, 29, "0 0 27 29", svg`<path d="M3 0v7M20 0v7M0 3.500h23" stroke="#222" stroke-width="1.300"/><path d="M10 12h17v16H12V21M4 10Q-3 20 8 24M3 24.500h7L8 18" stroke="#4a78c0" stroke-width="1.200"/><path d="M10.500 12H26v15.500" stroke="#333"/>`)}</span>
        <span class="s3">${icon(26, 22, "0 0 26 22", svg`<path d="M1 11Q8 3 16 3.500M2 12Q5 16 11 12.500 14 9 12 7M8 10L21 3M14 10q5 2 7 5 3 2 4 4M10 14q3 4 10 8" stroke="#4a78b8" stroke-width="1.300"/><path d="M24 0L7 9.500 3 11.500" stroke="#222" stroke-width="2"/>`)}</span>
      </div>
      <div class="body">
        <div class="side">
          <div class="row shead">${icon(9, 17, "0 0 9 17", svg`<path d="M8.500.5L1 8.500l7.500 8" stroke="#8000a0" stroke-width="1.700"/>`)}<fit-text text="Recent Notes" w="115"></fit-text></div>
          <div class="note on"><div><fit-text class="nt" text="FM Bandwidth E..." w="161"></fit-text><fit-text class="ns" text="R C's Notebook » Qu..." w="162"></fit-text></div>
            <div class="thumb">${icon(51, 51, "0 0 51 51", svg`<path d="M6 13h13M13 13v8M17 16q4 1 1 4M27 15h7M27 18h6M41 18L42 11l7 8 2-8" stroke="#222" stroke-width="1.200"/><path d="M8 41q4 4 1 9" stroke="#f09aa8" stroke-width="1.200"/><path d="M18 48h7" stroke="#f09aa8" stroke-width="3"/><path d="M25 48Q38 49 51 46M40 47q6 0 10 3" stroke="#222" stroke-width="1.300"/><circle cx="25" cy="48" r="2.200" fill="#e8104c"/>`)}</div></div>
          <div class="note"><div><fit-text class="nt" text="Untitled Page" w="121"></fit-text><fit-text class="ns" text="R C's Notebook » Quick Notes" w="217"></fit-text></div></div>
        </div>
        <div class="pad"><ink-canvas></ink-canvas></div>
      </div>
    </div>`;
  }

  render() {
    return html`
      ${this.system()} ${this.tabs()} ${this.toolbar()} ${this.marks()} ${this.meet()}
      <div class="stage">${this.notes()}
        <div class="row pill">
          ${icon(20, 20, "2 2 20 20", svg`<path d="M7 3h10v2h-1v6l2.500 3v1.500H13V22h-2v-6.500H5.500V14L8 11V5H7Z" fill="#b5e8a8"/><path d="M3 4.500L20.500 22" stroke="#5c7a58" stroke-width="1.500"/><path d="M3 3L21 21" stroke="#d5f0cc" stroke-width="1.600"/>`)}
          ${icon(20, 20, "2 2 20 20", MIC_OFF_THIN)}
          ${icon(20, 20, "0 0 20 20", svg`<circle cx="10" cy="10" r="9" stroke="#b0b2b5" stroke-width="1.500"/><path d="M5 10h10" stroke="#b0b2b5" stroke-width="1.500"/>`)}
        </div>
      </div>
      <div class="foot">
        <div class="row room"><fit-text text="cyjsmtyrhf" w="86"></fit-text>${icon(12, 7, "0 0 12 7", svg`<path d="M.7 6.500L6 1.200l5.300 5.300" stroke="#5f6368" stroke-width="1.700"/>`)}</div>
        <div class="row calls">
          <div class="call">${icon(24, 24, "0 0 24 24", MIC_OFF_THIN)}</div>
          <div class="call end">${icon(24, 24, "0 0 24 24", svg`<path d=${HANGUP} fill="#e2000f"/>`)}</div>
          <div class="call">${icon(24, 24, "0 0 24 24", svg`<path d="M7.500 5.500H16V10l5-4v12l-5-4v-1M16 16.500v2H4V5.500M2.500 2.500l19 19" stroke="#fff" stroke-width="1.700"/>`)}</div>
        </div>
        <div class="row fr">
          <div class="col cap">${icon(18, 16, "0 0 18 16", svg`<rect x=".8" y=".8" width="16.400" height="14.400" rx="1.500" stroke="#5f6368" stroke-width="1.500"/><path d="M8 6.300H4.700v3.400H8M13.800 6.300H10.500v3.400h3.300" stroke="#5f6368" stroke-width="1.400"/>`)}<fit-text text="Turn on captions" w="104"></fit-text></div>
          <div class="col prs">${icon(22, 18, "0 0 22 18", svg`<rect x="1" y="1" width="20" height="16" rx="1.500" stroke="#00796b" stroke-width="2"/><path d="M1 2h20" stroke="#00796b" stroke-width="2"/><path d="M11 13.500V6M8 9l3-3.500L14 9" stroke="#00796b" stroke-width="1.800"/>`)}<fit-text text="R C Thakur" w="65"></fit-text><fit-text text="is presenting" w="79"></fit-text></div>
          <div class="dots">${icon(12, 17, "0 0 12 17", svg`<circle cx="6" cy="2" r="2" fill="#3c4043"/><circle cx="6" cy="8.500" r="2" fill="#3c4043"/><circle cx="6" cy="15" r="2" fill="#3c4043"/>`)}</div>
        </div>
      </div>`;
  }
}
